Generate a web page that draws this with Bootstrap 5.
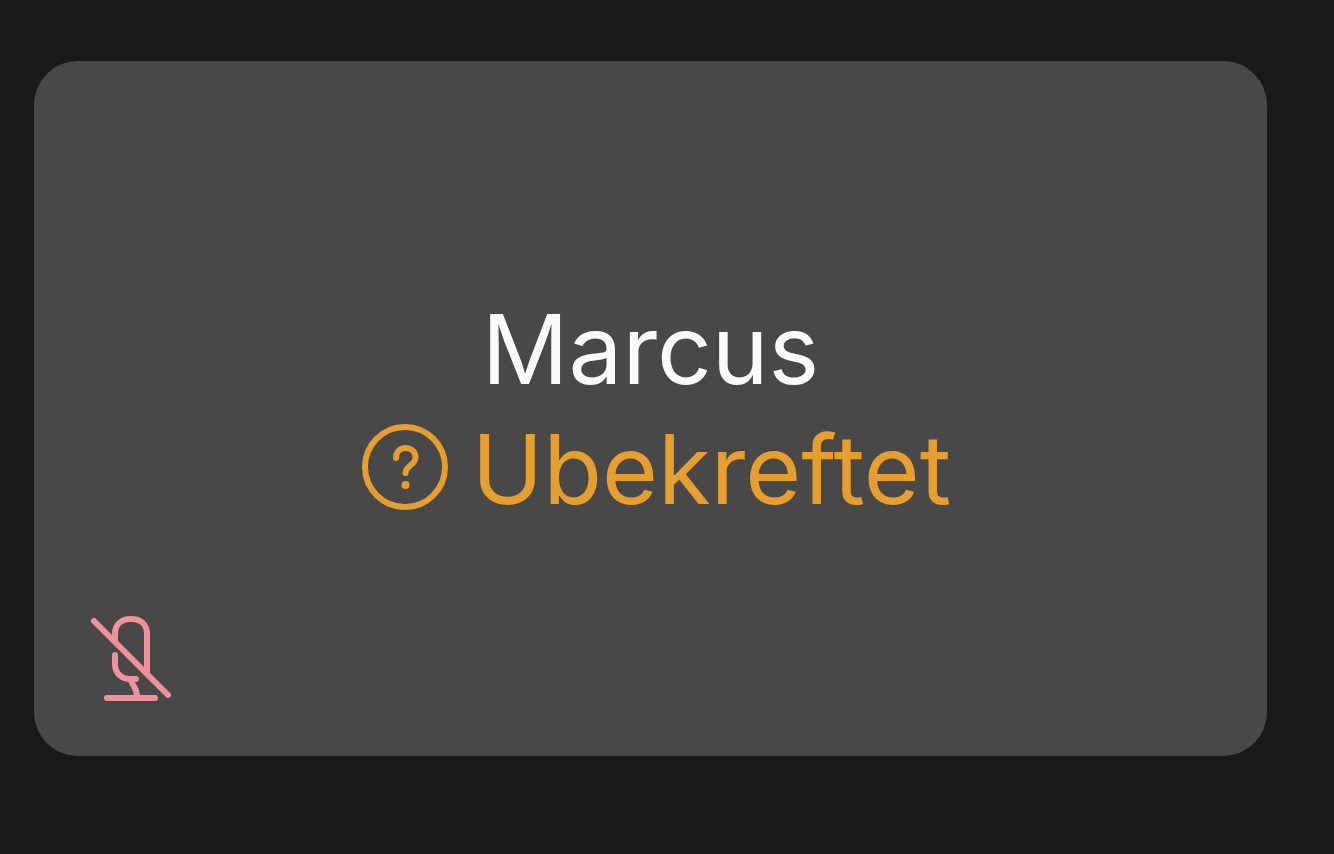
<!DOCTYPE html>
<html lang="nb" data-bs-theme="dark">
<head>
<meta charset="utf-8">
<meta name="viewport" content="width=device-width, initial-scale=1">
<title>Marcus</title>
<link rel="stylesheet" href="https://cdn.jsdelivr.net/npm/bootstrap@5.3.0/dist/css/bootstrap.min.css">
<style>
body { background: #191919; font-family: Inter, "Liberation Sans", sans-serif; }
.stage { padding: 61px 67px 98px 34px; }
.tile { background: #484848; border-radius: 44px; }
.tile-text { font-size: 96px; line-height: 120px; font-weight: 400; }
.display-name { color: #fafafa; }
.unverified { color: #e69e30; gap: 24px; padding-left: 12px; }
.muted { left: 56px; bottom: 52px; color: #f0929a; }
</style>
</head>
<body>
<main class="stage d-flex min-vh-100">
  <section class="tile position-relative flex-fill d-flex flex-column align-items-center justify-content-center" aria-label="Marcus">
    <h1 class="tile-text display-name m-0">Marcus</h1>
    <div class="tile-text unverified d-flex align-items-center">
      <svg width="86" height="90" viewBox="0 0 86 90" fill="none" stroke="currentColor" stroke-linecap="round" stroke-linejoin="round" aria-hidden="true">
        <circle cx="43" cy="43" r="40" stroke-width="6"/>
        <path d="M34 34C34 28 38 24 43.500 24C49.500 24 53.500 28 53.500 33.500C53.500 41 44 41 43.500 49" stroke-width="6"/>
        <circle cx="43.500" cy="61" r="4" fill="currentColor" stroke="none"/>
      </svg>
      <span>Ubekreftet</span>
    </div>
    <svg class="muted position-absolute" width="82" height="90" viewBox="0 0 82 90" fill="none" stroke="currentColor" stroke-width="6" stroke-linecap="round" stroke-linejoin="round" role="img" aria-label="Mikrofon av">
      <path d="M4 7L78 81"/>
      <path d="M25 27V20C25 10 32 5 41 5S57 10 57 20V57"/>
      <path d="M25 41V50C25 59 31 65 40 65H46M41 66C42 72 47 73 47 83"/>
      <path d="M17 84H65"/>
    </svg>
  </section>
</main>
<script src="https://cdn.jsdelivr.net/npm/bootstrap@5.3.0/dist/js/bootstrap.bundle.min.js"></script>
</body>
</html>
